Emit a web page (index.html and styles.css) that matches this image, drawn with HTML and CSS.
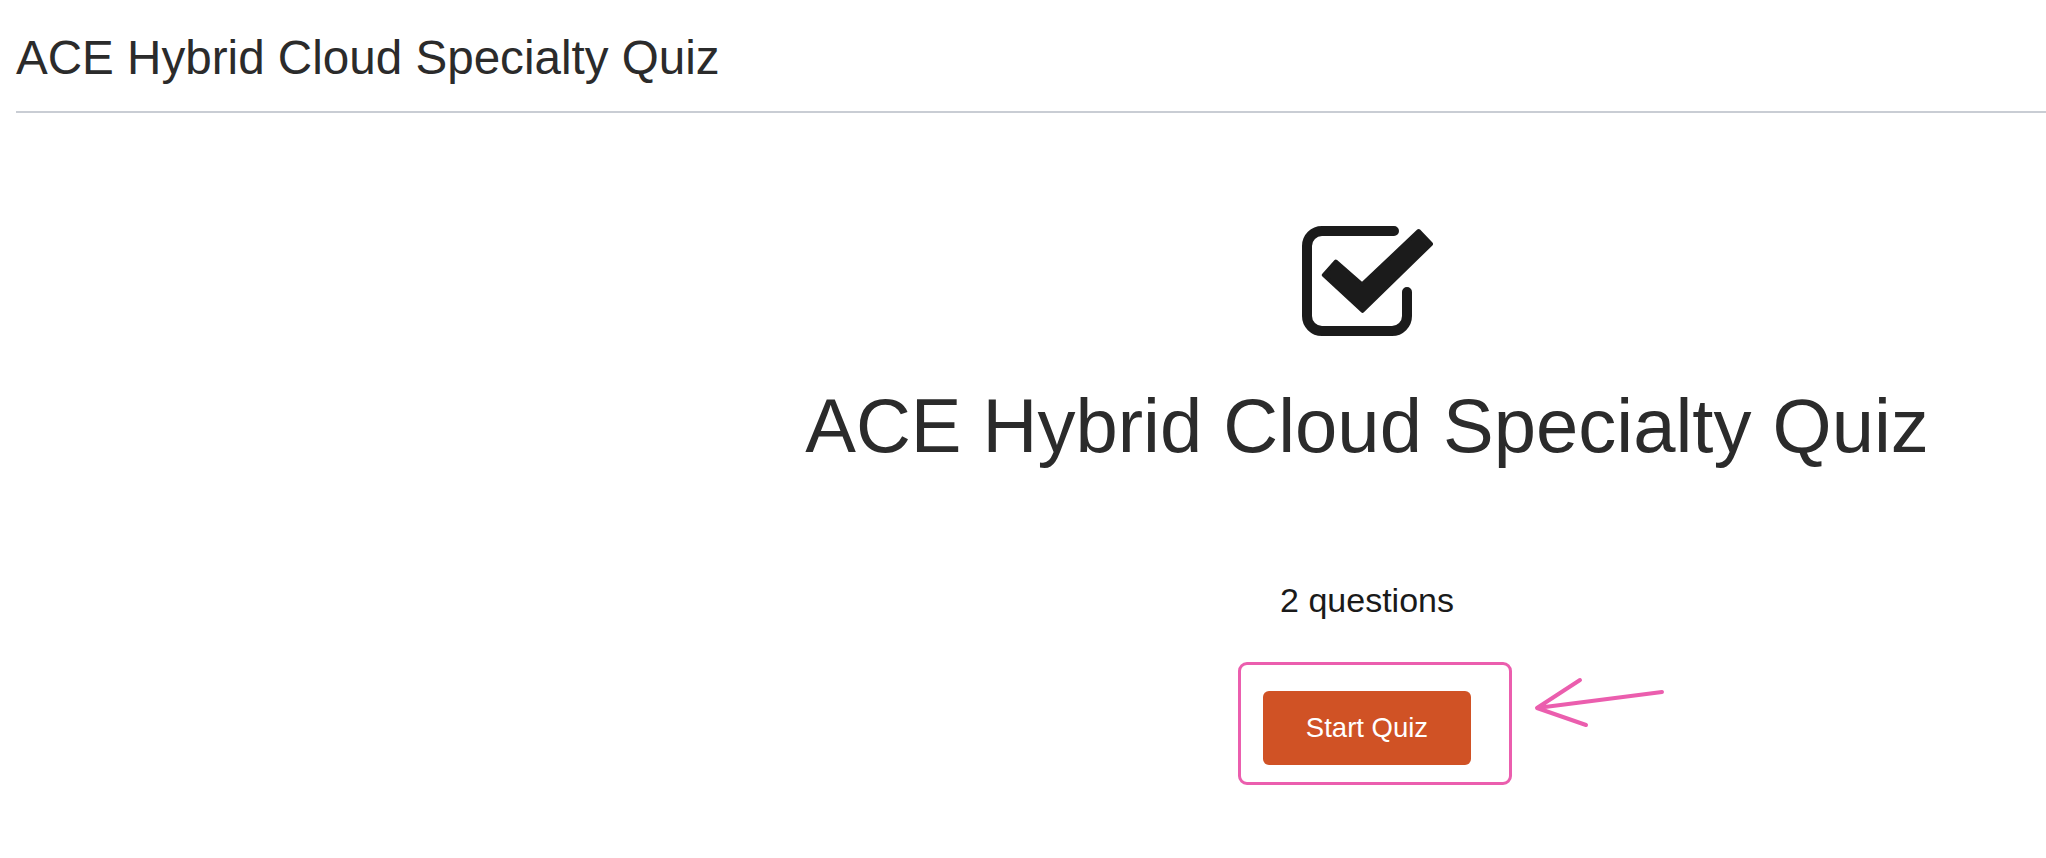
FILE: index.html
```html
<!DOCTYPE html>
<html lang="en">
<head>
<meta charset="utf-8">
<title>ACE Hybrid Cloud Specialty Quiz</title>
<link rel="stylesheet" href="styles.css">
</head>
<body>
  <header class="topbar">
    <h1 class="topbar-title">ACE Hybrid Cloud Specialty Quiz</h1>
  </header>
  <div class="layout">
    <aside class="sidebar"></aside>
    <main class="main">
      <svg class="quiz-icon" width="130" height="110" viewBox="0 0 130 110" aria-hidden="true">
        <path d="M 92 5 H 20 A 15 15 0 0 0 5 20 V 90 A 15 15 0 0 0 20 105 H 90 A 15 15 0 0 0 105 90 V 66" fill="none" stroke="#1b1b1b" stroke-width="10" stroke-linecap="round"/>
        <polygon points="33.8,35.6 60.1,58.5 116.6,5.0 129.0,18.0 60.5,84.9 21.8,49.0" fill="#1b1b1b" stroke="#1b1b1b" stroke-width="4" stroke-linejoin="round"/>
      </svg>
      <h2 class="quiz-title">ACE Hybrid Cloud Specialty Quiz</h2>
      <p class="quiz-count">2 questions</p>
      <div class="start-wrap">
        <button class="start-btn" type="button">Start Quiz</button>
        <div class="highlight-box"></div>
        <svg class="highlight-arrow" width="140" height="65" viewBox="0 0 140 65" aria-hidden="true">
          <path d="M 133 22 L 8 38 M 51 10 L 8 38 L 57 55" fill="none" stroke="#eb5eae" stroke-width="4" stroke-linecap="round" stroke-linejoin="round"/>
        </svg>
      </div>
    </main>
  </div>
</body>
</html>
```

FILE: styles.css
```css
* {
  box-sizing: border-box;
}

html,
body {
  min-height: 100%;
}

body {
  margin: 0;
  background: #ffffff;
  font-family: "Liberation Sans", Arial, Helvetica, sans-serif;
  color: #2b2b2b;
}

.topbar {
  margin-left: 16px;
  padding-top: 30px;
  padding-bottom: 25px;
  border-bottom: 2px solid #c9cdd4;
}

.topbar-title {
  margin: 0;
  font-size: 47.6px;
  font-weight: 400;
  line-height: 56px;
  color: #2b2b2b;
}

.layout {
  display: grid;
  grid-template-columns: 688px 1fr;
}

.main {
  display: flex;
  flex-direction: column;
  align-items: center;
  padding-top: 113px;
  padding-bottom: 93px;
}

.quiz-icon {
  display: block;
  overflow: visible;
}

.quiz-title {
  margin: 46px 0 0;
  font-size: 76px;
  font-weight: 400;
  line-height: 88px;
  color: #2b2b2b;
  white-space: nowrap;
}

.quiz-count {
  margin: 110px 0 0;
  font-size: 34px;
  line-height: 40px;
  color: #1a1a1a;
}

.start-wrap {
  position: relative;
  margin-top: 71px;
}

.start-btn {
  display: block;
  width: 208px;
  height: 74px;
  padding: 0;
  border: none;
  border-radius: 6px;
  background: #d05225;
  color: #ffffff;
  font-family: "Liberation Sans", Arial, Helvetica, sans-serif;
  font-size: 27.5px;
  line-height: 74px;
  cursor: pointer;
}

.highlight-box {
  position: absolute;
  left: -25px;
  top: -29px;
  width: 274px;
  height: 123px;
  border: 3px solid #eb5eae;
  border-radius: 9px;
  pointer-events: none;
}

.highlight-arrow {
  position: absolute;
  left: 266px;
  top: -21px;
  pointer-events: none;
}
```
